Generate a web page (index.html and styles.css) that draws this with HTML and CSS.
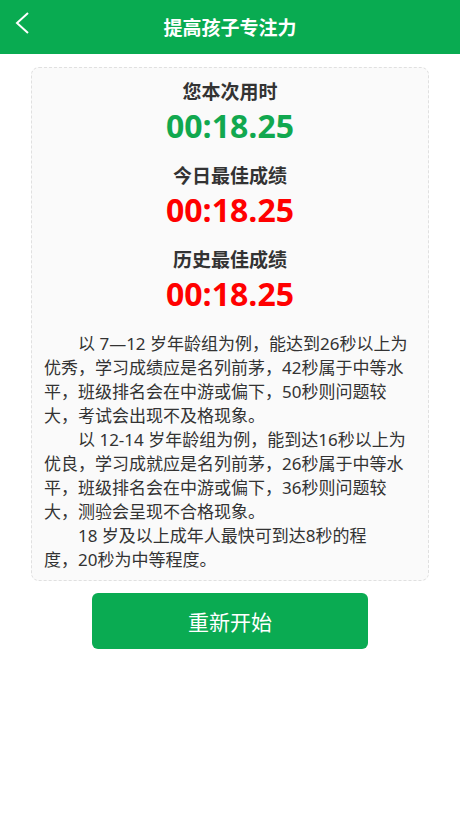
FILE: index.html
```html
<!DOCTYPE html>
<html lang="zh-CN">
<head>
    <meta charset="UTF-8">
    <meta name="viewport" content="width=device-width, initial-scale=1.0">
    <title>提高孩子专注力</title>
    <link rel="stylesheet" href="styles.css">
</head>
<body>
    <header class="top-bar">
        <a class="back" href="#">
            <svg width="16" height="24" viewBox="0 0 16 24">
                <polyline points="13,2 2,12 13,22" fill="none" stroke="#fff" stroke-width="2"/>
            </svg>
        </a>
        <h1>提高孩子专注力</h1>
    </header>

    <div class="result-card">
        <div class="score-block">
            <p class="score-label">您本次用时</p>
            <p class="score-time current">00:18.25</p>
        </div>
        <div class="score-block">
            <p class="score-label">今日最佳成绩</p>
            <p class="score-time best">00:18.25</p>
        </div>
        <div class="score-block">
            <p class="score-label">历史最佳成绩</p>
            <p class="score-time best">00:18.25</p>
        </div>

        <div class="tips">
            <p>以 7—12 岁年龄组为例，能达到26秒以上为优秀，学习成绩应是名列前茅，42秒属于中等水平，班级排名会在中游或偏下，50秒则问题较大，考试会出现不及格现象。</p>
            <p>以 12-14 岁年龄组为例，能到达16秒以上为优良，学习成就应是名列前茅，26秒属于中等水平，班级排名会在中游或偏下，36秒则问题较大，测验会呈现不合格现象。</p>
            <p>18 岁及以上成年人最快可到达8秒的程<br>度，20秒为中等程度。</p>
        </div>
    </div>

    <div class="actions">
        <button class="restart">重新开始</button>
    </div>
</body>
</html>
```

FILE: styles.css
```css
* {
    box-sizing: border-box;
}

body {
    margin: 0;
    font-family: "Noto Sans", "Noto Sans CJK SC", sans-serif;
    background-color: #ffffff;
    color: #333;
}

.top-bar {
    position: relative;
    height: 54px;
    background-color: #09ab51;
    display: flex;
    align-items: center;
    justify-content: center;
}

.top-bar h1 {
    margin: 0;
    color: #fff;
    font-size: 19px;
    font-weight: bold;
}

.back {
    position: absolute;
    left: 15px;
    top: 11px;
    display: block;
    width: 16px;
    height: 24px;
}

.back svg {
    display: block;
}

.result-card {
    margin: 13px 31px 0;
    padding: 12px 12px 8px;
    background-color: #fafafa;
    border: 1px dashed #e0e0e0;
    border-radius: 8px;
}

.score-block {
    text-align: center;
    margin-bottom: 16px;
}

.score-block p {
    margin: 0;
}

.score-label {
    font-size: 19px;
    font-weight: bold;
    line-height: 24px;
    color: #333;
}

.score-time {
    font-family: "Open Sans", "Noto Sans", sans-serif;
    font-size: 32px;
    font-weight: bold;
    line-height: 44px;
}

.score-time.current {
    color: #11a84f;
}

.score-time.best {
    color: #ff0000;
}

.tips {
    margin-top: 1px;
}

.tips p {
    margin: 0;
    font-size: 17px;
    line-height: 24px;
    text-indent: 2em;
    color: #333;
}

.actions {
    display: flex;
    justify-content: center;
    margin-top: 12px;
}

.restart {
    width: 276px;
    height: 56px;
    border: none;
    border-radius: 6px;
    background-color: #0aab52;
    color: #fff;
    font-family: "Noto Sans CJK SC", sans-serif;
    font-size: 21px;
    cursor: pointer;
}
```
